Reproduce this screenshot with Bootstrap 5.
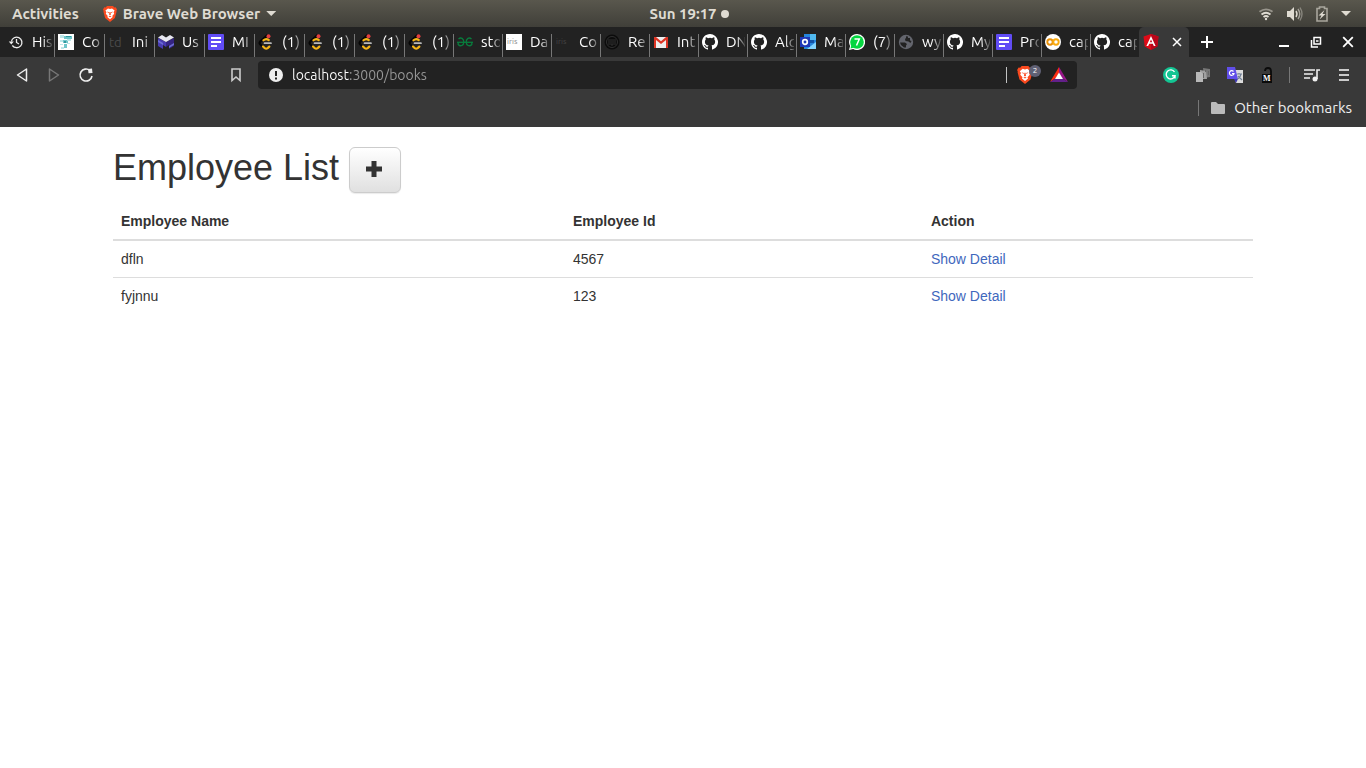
<!DOCTYPE html>
<html lang="en">
<head>
<meta charset="utf-8">
<meta name="viewport" content="width=device-width, initial-scale=1">
<title>Employee List</title>
<link href="https://cdn.jsdelivr.net/npm/bootstrap@5.3.0/dist/css/bootstrap.min.css" rel="stylesheet">
<style>
  :root { --ui: "Ubuntu", "Noto Sans", sans-serif; }
  body { font-family: "Liberation Sans", Arial, sans-serif; font-size: 14px; line-height: 20px; color: #333; background: #fff; }
  svg { display: block; flex: none; }
  button { font-family: inherit; }
  .plain { background: none; border: 0; padding: 0; color: inherit; display: flex; align-items: center; }

  .desktop-bar { height: 27px; background: linear-gradient(#59574d, #403f39); font-family: var(--ui); font-weight: 700; font-size: 15px; color: #dfdbd2; text-shadow: 0 1px 1px #222; }
  .bar-side { flex: 1 1 0; padding: 0 15px 0 12px; }
  .tray { gap: 13px; }
  .app-menu { gap: 6px; }
  .clock { gap: 4px; padding-left: 12px; }
  .caret { width: 10px; height: 5px; background: currentColor; clip-path: polygon(0 0, 100% 0, 50% 100%); }
  .dot { width: 8px; height: 8px; background: #dfdbd2; }

  .tabstrip { height: 30px; background: #222; padding-left: 4px; font-family: var(--ui); font-size: 15px; color: #fff; }
  .tab { flex: 0 1 49px; min-width: 0; height: 30px; padding: 0 2px 0 4px; gap: 8px; overflow: hidden; background: linear-gradient(#777, #777) left bottom / 1px 23px no-repeat; }
  .tab.wide { flex-basis: 50px; }
  .tab.first { background: none; }
  .tab-name { flex: 1 1 0; min-width: 0; text-align: left; overflow: hidden; white-space: nowrap; mask-image: linear-gradient(90deg, #000 50%, rgba(0,0,0,.2)); -webkit-mask-image: linear-gradient(90deg, #000 50%, rgba(0,0,0,.2)); }
  .tab-active { flex: 0 0 50px; height: 30px; background: #393939; border-radius: 5px 5px 0 0; padding: 0 7px 0 4px; }
  .new-tab { margin-left: 11px; }
  .window-keys { gap: 20px; margin-left: auto; padding-right: 12px; }

  .toolbar { height: 36px; background: #393939; color: #eee; }
  .nav-side { flex: 0 0 258px; padding: 0 14px; gap: 16px; }
  .tool-side { flex: 0 0 289px; padding: 0 14px; gap: 16px; }
  .rule { width: 1px; height: 16px; background: #777; flex: none; }
  .tool-side .rule { margin: 0 -2px; }
  .address { height: 28px; background: #222; border-radius: 4px; padding: 0 8px 0 10px; gap: 8px; font-family: var(--ui); }
  .address input { border: 0; outline: 0; padding: 0; min-width: 0; height: 24px; font-size: 14px; color: transparent; background: linear-gradient(90deg, #fff 58px, #999 58px); -webkit-background-clip: text; background-clip: text; }
  .shield { position: relative; width: 24px; height: 20px; margin-left: 2px; }
  .shield-count { position: absolute; right: 0; top: 0; width: 12px; height: 12px; background: #5f6074; color: #fff; font-size: 8px; line-height: 12px; text-align: center; }
  .bookmark-bar { height: 34px; background: #393939; padding: 0 14px 4px; gap: 11px; font-family: var(--ui); font-size: 15px; color: #eee; }

  .page { max-width: 1140px; }
  .page h1 { font-size: 36px; line-height: 42px; font-weight: 400; gap: 10px; margin: 20px 0 10px; color: #333; }
  .add-button { width: 52px; height: 46px; border: 1px solid #ccc; border-radius: 6px; background: linear-gradient(#fff, #e0e0e0); color: #333; box-shadow: 0 1px 1px rgba(0,0,0,.08); padding: 0 2px 2px 0; }
  .staff { --bs-table-color: #333; border-color: #ddd; table-layout: fixed; }
  .staff th, .staff td { padding: 8px; }
  .staff thead th { border-bottom: 2px solid #ddd; }
  .staff tbody tr:last-child td { border-bottom: 0; }
  .staff a { color: #3f68bd; text-decoration: none; }
  .c-name { width: 39.65%; }
  .c-id { width: 31.4%; }
</style>
</head>
<body>

<svg width="0" height="0" class="position-absolute" aria-hidden="true">
  <defs>
    <symbol id="brave" viewBox="0 0 14 16">
      <path fill="#fb4a1f" d="M4 0h6l1.300 1.500 1.400-.2L14 3.600 13.400 5l.2.500-1.700 6.600L7 16l-4.900-3.900L.4 5.500l.2-.5L0 3.600l1.300-2.300 1.400.2z"/>
      <path fill="#fff" d="M7 3l2-.5 2.600 2.100-1 1.600.6 1.500-2 2.300.5 1-2.700 2.300L4.300 11l.5-1-2-2.300.6-1.500-1-1.600L5 2.500z"/>
      <path fill="#fb4a1f" d="M3.800 5.600l2.200.7-.4.900zM10.200 5.600L8 6.300l.4.900zM6.500 6h1l.4 2.600-.9.700-.9-.7zM5.500 10.200L7 9.800l1.500.4L7 11.200z"/>
    </symbol>
    <symbol id="history" viewBox="0 0 16 16">
      <g fill="none" stroke="#eee" stroke-width="1.300"><path d="M4.300 11.500A5.300 5.300 0 1 0 3.400 7.500"/><path d="M8.500 5v3.500l2.500 1.500"/></g><path fill="#eee" d="M.8 7.500h5L3.300 10.500z"/>
    </symbol>
    <symbol id="script-page" viewBox="0 0 16 16">
      <path fill="#fff" d="M0 0h16v16H0z"/><path fill="#6fc6ca" d="M6 2h8v3H6zM5 6h5v3H5zM6 10h3v4H6z"/><path fill="#bde6e8" d="M2 1h4v3H2zM2 6h3v2H2zM9 5h4v2H9zM2 10h3v1H2zM3 13h3v2H3zM9 9h3v1H9z"/><path fill="#2e999f" d="M8 2h5v1H8zM6 7h2v2H6z"/>
    </symbol>
    <symbol id="mx" viewBox="0 0 16 16">
      <path fill="#483bb0" d="M0 4l8 4v5l-3-2v4L0 12z"/><path fill="#352482" d="M16 4L8 8v5l3-2v4l5-3z"/><path fill="#e9e9f2" d="M0 3.500L4 1l4 2.500L12 1l4 2.500L8 8z"/><path fill="#6b6bd2" d="M0 6l5 3v2L0 8zM16 9l-5 3v2l5-3z"/>
    </symbol>
    <symbol id="forms" viewBox="0 0 16 16">
      <rect width="16" height="16" rx="1" fill="#614cf5"/><path fill="#fff" d="M3 3h10v2H3zM3 7h10v2H3zM3 11h6v2H3z"/>
    </symbol>
    <symbol id="leet" viewBox="0 0 16 16">
      <g fill="none" stroke-linecap="round" stroke-width="2.200"><path stroke="#050505" d="M9 1.500L2.200 7.600Q1 9 2.200 10.300L4.500 12.500"/><path stroke="#f5b515" d="M5 12.500l1.700 1.600q1.500 1 3 0l1.600-1.500M5.500 6.300q2.500-2.300 5.200-.3"/><path stroke="#b9b9b9" stroke-width="1.700" d="M6.500 9.200H13"/></g><circle cx="10.500" cy="2.300" r="2" fill="#e34040"/>
    </symbol>
    <symbol id="geeks" viewBox="0 0 16 16">
      <g fill="none" stroke="#087d3d" stroke-width="1.300"><path d="M1.500 5C4 2.800 6.800 4.500 6.800 8S3.500 13 1.200 10.500V8.500M14.500 5C12 2.800 9.200 4.500 9.200 8s3.300 5 5.600 2.500V8.500"/><path d="M0 8.300h16"/></g>
    </symbol>
    <symbol id="black-disc" viewBox="0 0 16 16">
      <circle cx="8" cy="8" r="7.500" fill="#0c0c0c"/><g fill="none" stroke="#303030"><circle cx="8" cy="8" r="5.500"/><path d="M5 5v6M7 5v6h2V5M11 5v6"/></g>
    </symbol>
    <symbol id="gmail" viewBox="0 0 16 16">
      <path fill="#eee" d="M1 3h14v11H1z"/><path fill="#dc3424" d="M1 3h2l5 4.200L13 3h2v11h-2V6L8 10 3 6v8H1z"/>
    </symbol>
    <symbol id="octocat" viewBox="0 0 16 16">
      <path fill="#fff" d="M8 0C3.580 0 0 3.580 0 8c0 3.540 2.290 6.530 5.470 7.590.4.070.55-.17.55-.38 0-.19-.01-.82-.01-1.490-2.010.37-2.530-.49-2.690-.94-.09-.23-.48-.94-.82-1.130-.28-.15-.68-.52-.01-.53.63-.01 1.080.58 1.230.82.72 1.210 1.870.87 2.330.66.07-.52.28-.87.51-1.070-1.780-.2-3.640-.89-3.640-3.950 0-.87.31-1.590.82-2.150-.08-.2-.36-1.020.08-2.120 0 0 .67-.21 2.200.82a7.600 7.600 0 0 1 4 0c1.530-1.040 2.200-.82 2.200-.82.44 1.100.16 1.920.08 2.120.51.56.82 1.270.82 2.150 0 3.070-1.870 3.750-3.650 3.950.29.25.54.73.54 1.480 0 1.070-.01 1.930-.01 2.200 0 .21.15.46.55.38A8 8 0 0 0 8 0z"/>
    </symbol>
    <symbol id="outlook" viewBox="0 0 16 16">
      <path fill="#2684dc" d="M4 0h12v15H4z"/><path fill="#50b8ee" d="M10 0h6v6h-6z"/><path fill="#1251a5" d="M10 6h4v3h-4z"/><path fill="#83d4ff" d="M16 8v7H7z"/><path fill="#1f38b7" d="M0 3h10v10H0z"/><circle cx="5" cy="8" r="2.300" fill="none" stroke="#fff" stroke-width="1.700"/>
    </symbol>
    <symbol id="whatsapp" viewBox="0 0 16 16">
      <path fill="#fff" d="M8 0a8 8 0 1 1-3.800 15L0 16l1.100-4A8 8 0 0 1 8 0z"/><circle cx="8" cy="8" r="6.800" fill="#05d63f"/><path fill="#05d63f" d="M1.500 14.500l1-4 3 3z"/><path fill="none" stroke="#fff" stroke-width="1.500" d="M5.500 5h4.800L7.500 11.500"/>
    </symbol>
    <symbol id="globe" viewBox="0 0 16 16">
      <circle cx="8" cy="8" r="7.200" fill="#63656d"/><path fill="#222" d="M2 8.500h5l2 1.500-1 1.500v2H6L3 11zM8 2.200l2 .3v1.500h2v2.500l1.500.5-1 2-2-1.500-3-.5-.5-2 1-1z"/>
    </symbol>
    <symbol id="colab" viewBox="0 0 16 16">
      <circle cx="8" cy="8" r="8" fill="#fff"/><g fill="none" stroke-width="1.900"><circle cx="5" cy="8" r="2.700" stroke="#e8900a"/><circle cx="11" cy="8" r="2.700" stroke="#f9ab10"/></g>
    </symbol>
    <symbol id="angular" viewBox="0 0 16 16">
      <path fill="#dd0b18" d="M8 0l7.500 2.600-1.200 10L8 16l-6.300-3.400-1.200-10z"/><path fill="#b9061a" d="M8 0l7.500 2.600-1.200 10L8 16z"/><path fill="#fff" fill-rule="evenodd" d="M8 2l4.600 10h-1.800l-1-2.300H6.200L5.200 12H3.400zm0 3.500L6.800 8.300h2.400z"/>
    </symbol>
    <symbol id="close" viewBox="0 0 10 10"><path d="M1 1l8 8M9 1L1 9" stroke="currentColor" stroke-width="1.500"/></symbol>
  </defs>
</svg>

<header>
  <div class="desktop-bar d-flex align-items-center">
    <div class="bar-side d-flex align-items-center">
      <button class="plain fw-bold">Activities</button>
      <button class="plain fw-bold ms-4 app-menu"><svg width="14" height="16"><use href="#brave"/></svg>Brave Web Browser<span class="caret"></span></button>
    </div>
    <button class="plain fw-bold clock">Sun 19:17<span class="dot rounded-circle"></span></button>
    <div class="bar-side tray d-flex align-items-center justify-content-end">
      <svg width="16" height="16" viewBox="0 0 16 16" fill="none" stroke="#dfdbd2" stroke-width="1.800"><path opacity=".5" d="M1.500 5.800q6.500-5 13 0"/><path d="M3.500 8.500q4.500-3.500 9 0M5.500 11q2.500-2 5 0"/><circle cx="8" cy="13" r="1.200" fill="#dfdbd2" stroke="none"/></svg>
      <svg width="16" height="16" viewBox="0 0 16 16"><path fill="#dfdbd2" d="M0 5h3l4-4v14l-4-4H0z"/><g fill="none" stroke="#dfdbd2" stroke-width="1.400"><path d="M9 5q2 3 0 6"/><path opacity=".6" d="M11 3q3.500 5 0 10"/><path opacity=".4" d="M13 1.500q4 6.500 0 13"/></g></svg>
      <svg width="12" height="16" viewBox="0 0 12 16"><path fill="none" stroke="#a9a69d" stroke-width="1.600" d="M1 2.500h2.500V1h5v1.500H11V15H1z"/><path fill="#dfdbd2" d="M8.500 4L2.500 9.500h3L3.500 13.500l6-5.500h-3z"/></svg>
      <span class="caret"></span>
    </div>
  </div>

  <nav class="tabstrip d-flex align-items-center" aria-label="Tabs">
    <button class="plain tab wide first"><svg width="16" height="16"><use href="#history"/></svg><span class="tab-name">His</span></button>
    <button class="plain tab wide"><svg width="16" height="16"><use href="#script-page"/></svg><span class="tab-name">Co</span></button>
    <button class="plain tab wide"><svg width="16" height="16"><text x="1" y="13" font-size="13" fill="#4a4a4a">td</text></svg><span class="tab-name">Ini</span></button>
    <button class="plain tab wide"><svg width="16" height="16"><use href="#mx"/></svg><span class="tab-name">Us</span></button>
    <button class="plain tab wide"><svg width="16" height="16"><use href="#forms"/></svg><span class="tab-name">MI</span></button>
    <button class="plain tab wide"><svg width="16" height="16"><use href="#leet"/></svg><span class="tab-name">(1)</span></button>
    <button class="plain tab wide"><svg width="16" height="16"><use href="#leet"/></svg><span class="tab-name">(1)</span></button>
    <button class="plain tab wide"><svg width="16" height="16"><use href="#leet"/></svg><span class="tab-name">(1)</span></button>
    <button class="plain tab"><svg width="16" height="16"><use href="#leet"/></svg><span class="tab-name">(1)</span></button>
    <button class="plain tab"><svg width="16" height="16"><use href="#geeks"/></svg><span class="tab-name">sto</span></button>
    <button class="plain tab"><svg width="16" height="16"><path fill="#fff" d="M0 0h16v16H0z"/><text x="1" y="10" font-size="8" fill="#888">iris</text></svg><span class="tab-name">Da</span></button>
    <button class="plain tab"><svg width="16" height="16"><text x="1" y="10" font-size="8" fill="#444">iris</text></svg><span class="tab-name">Co</span></button>
    <button class="plain tab"><svg width="16" height="16"><use href="#black-disc"/></svg><span class="tab-name">Re</span></button>
    <button class="plain tab"><svg width="16" height="16"><use href="#gmail"/></svg><span class="tab-name">Int</span></button>
    <button class="plain tab"><svg width="16" height="16"><use href="#octocat"/></svg><span class="tab-name">DN</span></button>
    <button class="plain tab"><svg width="16" height="16"><use href="#octocat"/></svg><span class="tab-name">Alg</span></button>
    <button class="plain tab"><svg width="16" height="16"><use href="#outlook"/></svg><span class="tab-name">Ma</span></button>
    <button class="plain tab"><svg width="16" height="16"><use href="#whatsapp"/></svg><span class="tab-name">(7)</span></button>
    <button class="plain tab"><svg width="16" height="16"><use href="#globe"/></svg><span class="tab-name">wy</span></button>
    <button class="plain tab"><svg width="16" height="16"><use href="#octocat"/></svg><span class="tab-name">My</span></button>
    <button class="plain tab"><svg width="16" height="16"><use href="#forms"/></svg><span class="tab-name">Pro</span></button>
    <button class="plain tab"><svg width="16" height="16"><use href="#colab"/></svg><span class="tab-name">cap</span></button>
    <button class="plain tab"><svg width="16" height="16"><use href="#octocat"/></svg><span class="tab-name">cap</span></button>
    <div class="tab-active d-flex align-items-center justify-content-between"><svg width="16" height="16"><use href="#angular"/></svg><button class="plain" aria-label="Close tab"><svg width="10" height="10"><use href="#close"/></svg></button></div>
    <button class="plain new-tab" aria-label="New tab"><svg width="14" height="14"><path d="M7 1v12M1 7h12" stroke="#fff" stroke-width="2"/></svg></button>
    <div class="window-keys d-flex align-items-center">
      <button class="plain" aria-label="Minimize"><svg width="12" height="12"><path d="M1 10h10" stroke="#fff" stroke-width="2"/></svg></button>
      <button class="plain" aria-label="Restore"><svg width="12" height="12" fill="none" stroke="#fff" stroke-width="1.500"><path d="M4 1.500h6.500V8H4z"/><path d="M1.500 4v7H8"/><path d="M6 5h2.500"/></svg></button>
      <button class="plain" aria-label="Close window"><svg width="12" height="12"><use href="#close"/></svg></button>
    </div>
  </nav>

  <div class="toolbar d-flex align-items-center">
    <div class="nav-side d-flex align-items-center">
      <button class="plain" aria-label="Back"><svg width="16" height="16"><path d="M12.500 2v12L3.500 8z" fill="none" stroke="#eee" stroke-width="1.500" stroke-linejoin="round"/></svg></button>
      <button class="plain" aria-label="Forward"><svg width="16" height="16"><path d="M3.500 2v12l9-6z" fill="none" stroke="#777" stroke-width="1.500" stroke-linejoin="round"/></svg></button>
      <button class="plain" aria-label="Reload"><svg width="16" height="16"><path d="M12 3.500A6 6 0 1 0 14 9" fill="none" stroke="#eee" stroke-width="1.600"/><path d="M10 2l4-.5.500 4.500-4 .3z" fill="#eee"/></svg></button>
      <button class="plain ms-auto" aria-label="Bookmark"><svg width="16" height="16"><path d="M4 2h8v11.500L8 10l-4 3.500z" fill="none" stroke="#ccc" stroke-width="1.600"/></svg></button>
    </div>
    <div class="address d-flex align-items-center flex-grow-1">
      <svg width="16" height="16"><circle cx="8" cy="8" r="7" fill="#eee"/><path d="M7 4h2v5H7zM7 10.500h2v2H7z" fill="#222"/></svg>
      <input class="flex-grow-1" type="text" value="localhost:3000/books" aria-label="Address">
      <span class="rule bg-light opacity-75"></span>
      <button class="plain shield" aria-label="Shields"><svg width="16" height="18"><use href="#brave"/></svg><span class="shield-count rounded-circle">2</span></button>
      <svg width="20" height="16" viewBox="0 0 20 16"><path fill="#fb2c14" d="M10 0L1 15l6-4 3-5z"/><path fill="#971689" d="M10 0v6l3 5 6 4z"/><path fill="#62208a" d="M1 15h18l-6-4H7z"/><path fill="#fff" d="M10 5.500L6 12h8z"/></svg>
    </div>
    <div class="tool-side d-flex align-items-center justify-content-end">
      <svg width="16" height="16"><circle cx="8" cy="8" r="8" fill="#13c593"/><path d="M11.500 5A4.500 4.500 0 1 0 12 8.700H9M12 8.500v3" fill="none" stroke="#fff" stroke-width="1.400"/></svg>
      <svg width="16" height="16"><path fill="#777" d="M8 1l7 1v8l-6 1z"/><path fill="#a0a0a0" d="M5 3l6 1 1 8H5z"/><path fill="#666" d="M10 3h1v2h-1zM13 4h1v4h-1zM8 6h1v5H8z"/><path fill="#b8b8b8" d="M1 5h5l2 2v8H1z"/></svg>
      <svg width="16" height="16"><path fill="#ddd" d="M6 3h10v13H9z"/><path fill="#604ee9" d="M0 0h8l3 12H0z"/><path fill="#3f38b4" d="M7 12h4l-2 4z"/><path d="M6.500 4.500a2.300 2.300 0 1 0 .5 2H5" fill="none" stroke="#fff" stroke-width="1.200"/><path d="M10 7h5M12 6v1M14 7q-1 4-3.500 5M11 9l4 4" fill="none" stroke="#718096" stroke-width="1.100"/></svg>
      <svg width="16" height="16"><path fill="#0b0b0b" d="M3 7h10v9H3z"/><path d="M6 4q0-3 3-3t3 3v4" fill="none" stroke="#0b0b0b" stroke-width="1.800"/><text x="4" y="14" font-family="Liberation Serif, serif" font-weight="700" font-size="8" fill="#fff">M</text></svg>
      <span class="rule"></span>
      <svg width="16" height="16"><path d="M0 3h11M0 7h9M0 11h6" stroke="#eee" stroke-width="1.600"/><path d="M13 12V3h3" fill="none" stroke="#eee" stroke-width="1.600"/><circle cx="11" cy="12" r="2.500" fill="#eee"/></svg>
      <button class="plain" aria-label="Menu"><svg width="16" height="16"><path d="M3 3h10M3 8h10M3 13h10" stroke="#ccc" stroke-width="2"/></svg></button>
    </div>
  </div>

  <div class="bookmark-bar d-flex align-items-center justify-content-end">
    <span class="rule"></span>
    <button class="plain gap-2"><svg width="16" height="16"><path d="M1 3q0-1 1-1h4l2 2h6q1 0 1 1v8q0 1-1 1H2q-1 0-1-1z" fill="#bbb"/></svg>Other bookmarks</button>
  </div>
</header>

<main class="page mx-auto">
  <h1 class="d-flex align-items-start">Employee List
    <button class="add-button d-flex align-items-center justify-content-center" aria-label="Add employee"><svg width="18" height="18"><path d="M9 1v16M1 9h16" stroke="currentColor" stroke-width="5"/></svg></button>
  </h1>
  <table class="table staff mb-0">
    <thead><tr><th class="c-name">Employee Name</th><th class="c-id">Employee Id</th><th>Action</th></tr></thead>
    <tbody>
      <tr><td>dfln</td><td>4567</td><td><a href="#">Show Detail</a></td></tr>
      <tr><td>fyjnnu</td><td>123</td><td><a href="#">Show Detail</a></td></tr>
    </tbody>
  </table>
</main>

<script src="https://cdn.jsdelivr.net/npm/bootstrap@5.3.0/dist/js/bootstrap.bundle.min.js"></script>
</body>
</html>
